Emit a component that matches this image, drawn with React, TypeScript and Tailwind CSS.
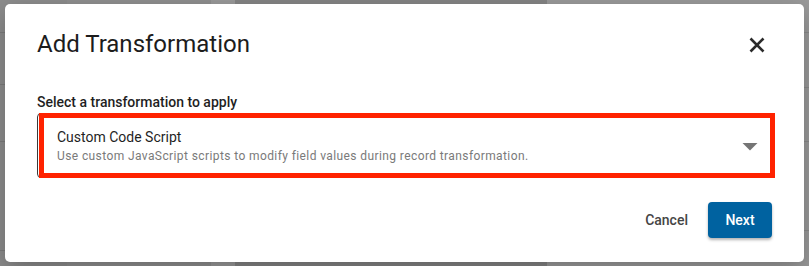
import React from 'react';

const font = { fontFamily: 'Roboto, "Liberation Sans", Arial, sans-serif' };

const CloseIcon = () => (
  <svg width="16" height="16" viewBox="0 0 16 16" stroke="#2b2b2b" strokeWidth="2.6" fill="none">
    <path d="M1.5 1.5 14.5 14.5M14.5 1.5 1.5 14.5" />
  </svg>
);

const ArrowDropDown = () => (
  <svg width="36" height="36" viewBox="0 0 24 24" fill="#757575">
    <path d="M7 10l5 5 5-5z" />
  </svg>
);

// page behind the overlay, greyed out
const Backdrop = () => (
  <div className="flex h-[266px] w-[809px]">
    <div className="flex w-[67px] flex-col bg-[#8c8c8c]">
      <div className="h-[33px] border-b border-[#7c7c7c]" />
      <div className="h-[52px] border-b border-[#7c7c7c]" />
      <div className="h-[57px] border-b border-[#7c7c7c]" />
      <div className="h-[109px] border-b border-[#7c7c7c]" />
    </div>
    <div className="w-[144px] bg-[#8f8f8f]" />
    <div className="w-[24px] bg-[#999999]" />
    <div className="w-[312px] bg-[#848484]" />
    <div className="flex flex-1 flex-col bg-[#9a9a9a]">
      <div className="h-[33px] border-b border-[#8a8a8a]" />
      <div className="h-[55px] border-b border-[#8a8a8a]" />
      <div className="h-[54px] border-b border-[#8a8a8a]" />
      <div className="h-[89px] border-b border-[#8a8a8a]" />
    </div>
  </div>
);

const App: React.FC = () => {
  return (
    <div className="relative h-[266px] w-[809px] overflow-hidden" style={font}>
      <Backdrop />

      {/* Dialog */}
      <div className="absolute left-[5px] top-[4px] flex h-[258px] w-[799px] flex-col rounded-[5px] bg-white px-[32px] pb-[24px] pt-[24px] shadow-[0_8px_24px_rgba(0,0,0,0.25)]">
        <div className="flex items-start justify-between">
          <h2 className="text-[24px] leading-[32px] font-normal text-[#1c1c1c]">Add Transformation</h2>
          <button className="mr-[7px] mt-[9px]">
            <CloseIcon />
          </button>
        </div>

        <label className="mt-[32px] block text-[14px] font-medium leading-[20px] text-[#1f1f1f]">
          Select a transformation to apply
        </label>

        {/* Select */}
        <div className="relative mt-[1px] flex h-[65px] w-[735px] items-center justify-between rounded-[4px] border border-[#3a3a3a] pl-[19px] pr-[3px]">
          <div className="flex flex-col">
            <span className="text-[14px] leading-[20px] text-[#1f1f1f]">Custom Code Script</span>
            <span className="text-[12px] leading-[18px] tracking-[0.4px] text-[#7a7a7a]">
              Use custom JavaScript scripts to modify field values during record transformation.
            </span>
          </div>
          <ArrowDropDown />
          {/* highlight annotation */}
          <div className="pointer-events-none absolute -bottom-[1px] -right-[4px] -top-[1.5px] left-[1px] border-[5px] border-[#ff2200]" />
        </div>

        <div className="mt-auto flex items-center justify-end gap-[12px]">
          <button className="h-[36px] rounded-[4px] px-[8px] text-[14px] font-medium text-[#454545]">Cancel</button>
          <button className="h-[36px] w-[64px] rounded-[4px] bg-[#0062a0] text-[14px] font-medium text-white shadow-[0_2px_3px_rgba(0,0,0,0.3)]">
            Next
          </button>
        </div>
      </div>
    </div>
  );
};

export default App;
